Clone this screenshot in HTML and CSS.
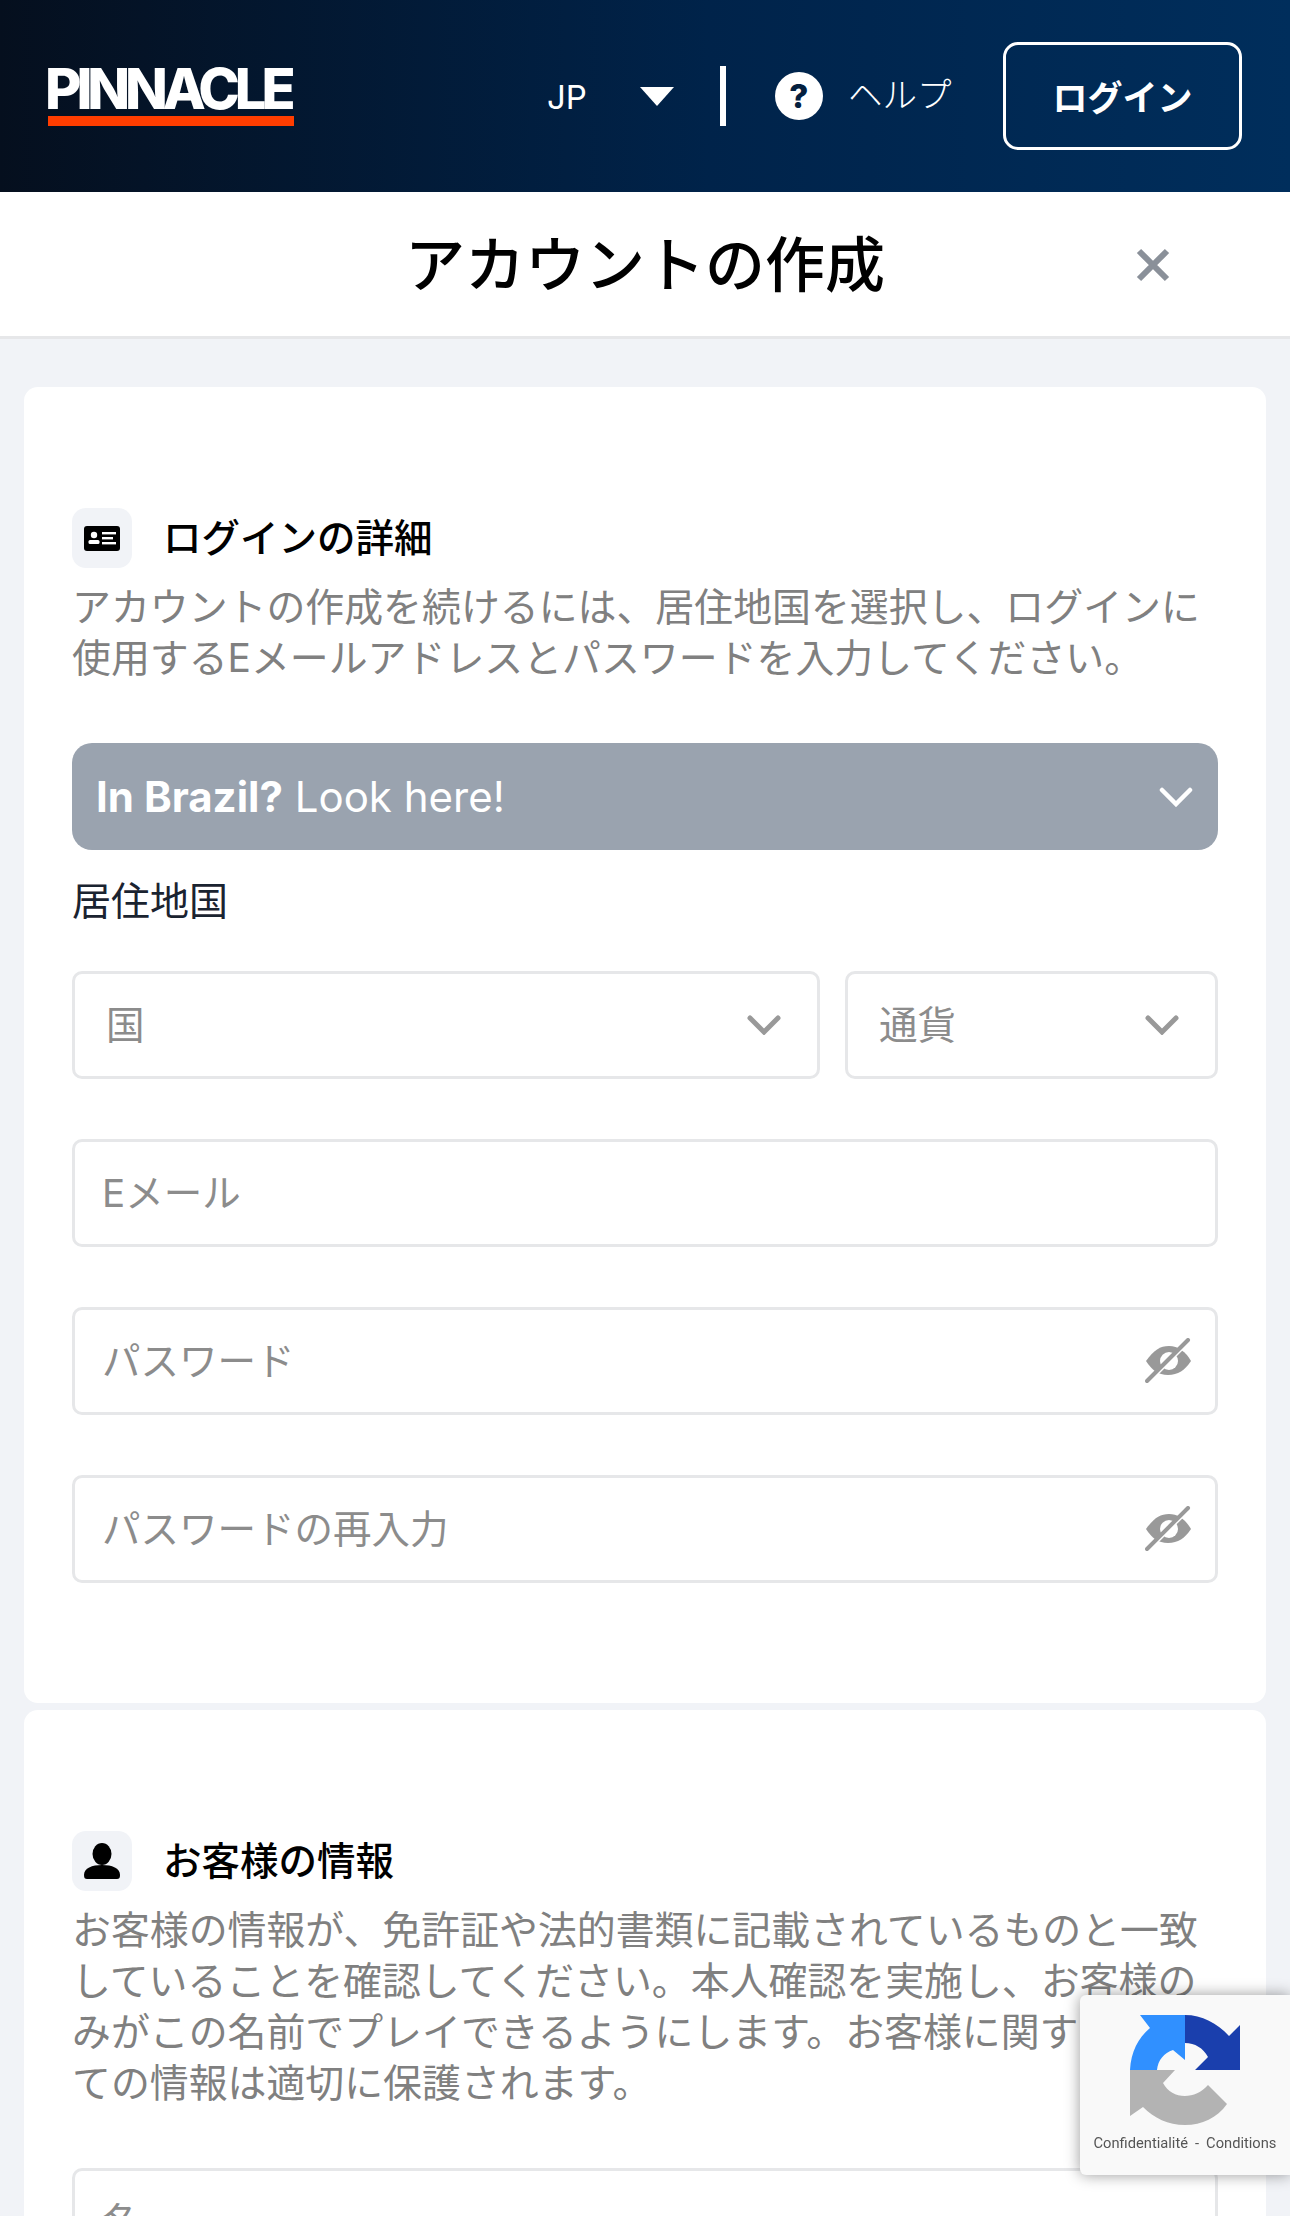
FILE: index.html
```html
<!DOCTYPE html>
<html lang="ja">
<head>
  <meta charset="UTF-8">
  <meta name="viewport" content="width=device-width, initial-scale=1.0">
  <title>アカウントの作成</title>
  <link rel="stylesheet" href="styles.css">
</head>
<body>

  <header class="topbar">
    <div class="logo">
      <span class="logo-text">PINNACLE</span>
      <span class="logo-bar"></span>
    </div>
    <div class="lang">JP</div>
    <div class="lang-caret"></div>
    <div class="topbar-divider"></div>
    <div class="help-icon">?</div>
    <div class="help-text">ヘルプ</div>
    <button class="login-btn">ログイン</button>
  </header>

  <div class="title-bar">
    <h1>アカウントの作成</h1>
    <svg class="close-icon" width="34" height="34" viewBox="0 0 34 34">
      <path d="M3 3 L31 31 M31 3 L3 31" />
    </svg>
  </div>

  <main class="content">
    <!-- ログインの詳細 -->
    <section class="card">
      <div class="section-head">
        <div class="section-icon">
          <svg width="36" height="25" viewBox="0 0 36 25">
            <rect width="36" height="25" rx="3" fill="#000" />
            <circle cx="10" cy="9" r="3.2" fill="#fff" />
            <rect x="4.5" y="14" width="11" height="4" rx="1.5" fill="#fff" />
            <rect x="18" y="6" width="14" height="2.4" fill="#fff" />
            <rect x="18" y="11" width="11" height="2.4" fill="#fff" />
            <rect x="18" y="16" width="14" height="2.4" fill="#fff" />
          </svg>
        </div>
        <h2>ログインの詳細</h2>
      </div>
      <p class="section-desc">アカウントの作成を続けるには、居住地国を選択し、ログインに使用するEメールアドレスとパスワードを入力してください。</p>

      <div class="notice">
        <span><b>In Brazil?</b> Look here!</span>
        <svg class="chevron chevron-white" width="34" height="20" viewBox="0 0 34 20">
          <path d="M3 3 L17 17 L31 3" />
        </svg>
      </div>

      <div class="field-label">居住地国</div>
      <div class="select-row">
        <div class="field field-country">
          <span>国</span>
          <svg class="chevron" width="34" height="20" viewBox="0 0 34 20"><path d="M3 3 L17 17 L31 3" /></svg>
        </div>
        <div class="field field-currency">
          <span>通貨</span>
          <svg class="chevron" width="34" height="20" viewBox="0 0 34 20"><path d="M3 3 L17 17 L31 3" /></svg>
        </div>
      </div>

      <div class="field field-text"><span>Eメール</span></div>
      <div class="field field-text">
        <span>パスワード</span>
        <svg class="eye" width="46" height="46" viewBox="0 0 46 46">
          <path class="eye-fill" d="M1 23 C9 12 15 8 24 8 C33 8 41 14 46 23 C40 32 33 37 23 37 C13 37 7 32 1 23 Z" />
          <circle class="eye-pupil" cx="24" cy="23" r="9" />
          <path class="eye-cut" d="M3 44 L44 3" />
          <path class="eye-slash" d="M2 43 L43 2" />
        </svg>
      </div>
      <div class="field field-text">
        <span>パスワードの再入力</span>
        <svg class="eye" width="46" height="46" viewBox="0 0 46 46">
          <path class="eye-fill" d="M1 23 C9 12 15 8 24 8 C33 8 41 14 46 23 C40 32 33 37 23 37 C13 37 7 32 1 23 Z" />
          <circle class="eye-pupil" cx="24" cy="23" r="9" />
          <path class="eye-cut" d="M3 44 L44 3" />
          <path class="eye-slash" d="M2 43 L43 2" />
        </svg>
      </div>
    </section>

    <!-- お客様の情報 -->
    <section class="card">
      <div class="section-head">
        <div class="section-icon">
          <svg width="36" height="36" viewBox="0 0 36 36">
            <ellipse cx="18" cy="11" rx="9.5" ry="11" fill="#000" />
            <path d="M0 32 C0 25 8 22 18 22 C28 22 36 25 36 32 C36 35 35 36 33 36 L3 36 C1 36 0 35 0 32 Z" fill="#000" />
          </svg>
        </div>
        <h2>お客様の情報</h2>
      </div>
      <p class="section-desc">お客様の情報が、免許証や法的書類に記載されているものと一致していることを確認してください。本人確認を実施し、お客様のみがこの名前でプレイできるようにします。お客様に関するすべての情報は適切に保護されます。</p>

      <div class="field field-text"><span>名</span></div>
    </section>
  </main>

  <div class="recaptcha">
    <svg width="110" height="110" viewBox="0 0 110 110">
      <path fill="#3090ff" d="M10 0 L55 0 L55 45 L43 35 C34 38 28 45 27 55 L0 55 C1 37 8 23 20 13 Z" />
      <path fill="#1a3fad" d="M55 0 C72 0 87 8 99 21 L110 10 L110 55 L65 55 L78 42 C73 33 65 28 55 28 Z" />
      <path fill="#b3b3b3" d="M0 55 L45 55 L33 68 C42 85 65 85 78 70 L97 89 C87 103 72 110 55 110 C38 110 24 103 13 92 L0 101 Z" />
    </svg>
    <div class="recaptcha-links">Confidentialité<span class="recaptcha-sep">-</span>Conditions</div>
  </div>

</body>
</html>
```

FILE: styles.css
```css
html, body {
  height: 2216px;
  overflow: hidden;
}

body {
  margin: 0;
  background-color: #f1f3f7;
  font-family: Inter, 'Noto Sans CJK JP', sans-serif;
}

/* ヘッダー */
.topbar {
  display: flex;
  align-items: center;
  height: 192px;
  padding: 0 48px;
  box-sizing: border-box;
  background: linear-gradient(90deg, #050f1e 0%, #00234a 55%, #002e5c 100%);
  color: #ffffff;
}

.logo {
  display: flex;
  flex-direction: column;
  width: 246px;
}

.logo-text {
  margin-left: -3px;
  font-family: Inter, sans-serif;
  font-size: 56px;
  font-weight: 800;
  line-height: 46px;
  letter-spacing: -5.1px;
  white-space: nowrap;
}

.logo-bar {
  height: 10px;
  margin-top: 4px;
  background-color: #ff3d00;
}

.lang {
  margin-left: 253px;
  margin-top: 2px;
  font-size: 33px;
}

.lang-caret {
  width: 0;
  height: 0;
  margin-left: 53px;
  border-left: 17px solid transparent;
  border-right: 17px solid transparent;
  border-top: 19px solid #ffffff;
}

.topbar-divider {
  width: 6px;
  height: 60px;
  margin-left: 46px;
  background-color: #ffffff;
}

.help-icon {
  width: 48px;
  height: 48px;
  margin-left: 49px;
  border-radius: 50%;
  background-color: #ffffff;
  color: #04203f;
  font-size: 33px;
  font-weight: 800;
  line-height: 48px;
  text-align: center;
}

.help-text {
  margin-left: 25px;
  margin-top: -8px;
  font-size: 34.5px;
  font-weight: 300;
}

.login-btn {
  width: 239px;
  height: 108px;
  margin-left: auto;
  padding-bottom: 3px;
  background: transparent;
  border: 3px solid #ffffff;
  border-radius: 15px;
  color: #ffffff;
  font-family: inherit;
  font-size: 35px;
  font-weight: 700;
}

/* タイトル */
.title-bar {
  position: relative;
  display: flex;
  justify-content: center;
  align-items: center;
  height: 144px;
  background-color: #ffffff;
  border-bottom: 3px solid #e6e7e9;
}

.title-bar h1 {
  margin: 0 0 7px;
  font-size: 60px;
  font-weight: 500;
  color: #000000;
}

.close-icon {
  position: absolute;
  right: 120px;
  top: 56px;
}

.close-icon path {
  fill: none;
  stroke: #8a9099;
  stroke-width: 6;
}

/* カード */
.content {
  padding: 48px 24px 0;
}

.card {
  padding: 120px 48px;
  margin-bottom: 7px;
  background-color: #ffffff;
  border-radius: 14px;
}

.section-head {
  display: flex;
  align-items: center;
  gap: 31px;
}

.section-head h2 {
  margin: 0 0 6px;
  font-size: 38.5px;
  font-weight: 500;
  color: #000000;
}

.section-icon {
  display: flex;
  justify-content: center;
  align-items: center;
  width: 60px;
  height: 60px;
  background-color: #f1f3f7;
  border-radius: 14px;
}

.section-desc {
  margin: 12px 0 60px;
  font-size: 38.9px;
  line-height: 51px;
  color: #808080;
}

.notice {
  display: flex;
  justify-content: space-between;
  align-items: center;
  height: 107px;
  padding: 0 25px 0 24px;
  background-color: #9aa3af;
  border-radius: 20px;
  color: #ffffff;
  font-size: 42px;
}

.field-label {
  margin: 25px 0 45px;
  font-size: 39px;
  line-height: 51px;
  color: #1a2330;
}

.select-row {
  display: flex;
  gap: 25px;
  margin-bottom: 60px;
}

.field {
  display: flex;
  justify-content: space-between;
  align-items: center;
  height: 108px;
  box-sizing: border-box;
  background-color: #ffffff;
  border: 3px solid #e6e7e9;
  border-radius: 10px;
  color: #8c8c8c;
  font-size: 38.5px;
}

.field span {
  margin-bottom: 6px;
}

.field-country {
  flex: 1;
  padding: 0 36px 0 31px;
}

.field-currency {
  width: 373px;
  padding: 0 36px 0 31px;
}

.field-text {
  padding: 0 24px 0 27px;
  margin-bottom: 60px;
}

.field-text:last-child {
  margin-bottom: 0;
}

.chevron path {
  fill: none;
  stroke: #999999;
  stroke-width: 5;
  stroke-linecap: round;
}

.chevron-white path {
  stroke: #ffffff;
  stroke-width: 4.5;
}

.eye-fill {
  fill: #999999;
}

.eye-pupil {
  fill: #ffffff;
}

.eye-cut {
  fill: none;
  stroke: #ffffff;
  stroke-width: 4;
}

.eye-slash {
  fill: none;
  stroke: #999999;
  stroke-width: 4;
  stroke-linecap: round;
}

/* reCAPTCHA */
.recaptcha {
  position: fixed;
  left: 1080px;
  top: 1995px;
  width: 210px;
  height: 180px;
  padding-top: 20px;
  box-sizing: border-box;
  background-color: #f9f9f9;
  border-radius: 6px 0 0 6px;
  box-shadow: 0 0 15px rgba(0, 0, 0, 0.4);
  text-align: center;
}

.recaptcha svg {
  display: block;
  margin: 0 0 0 50px;
}

.recaptcha-links {
  margin-top: 9px;
  font-family: Roboto, sans-serif;
  font-size: 14.7px;
  line-height: 18px;
  color: #555555;
  white-space: nowrap;
}

.recaptcha-sep {
  margin: 0 7px;
}
```
